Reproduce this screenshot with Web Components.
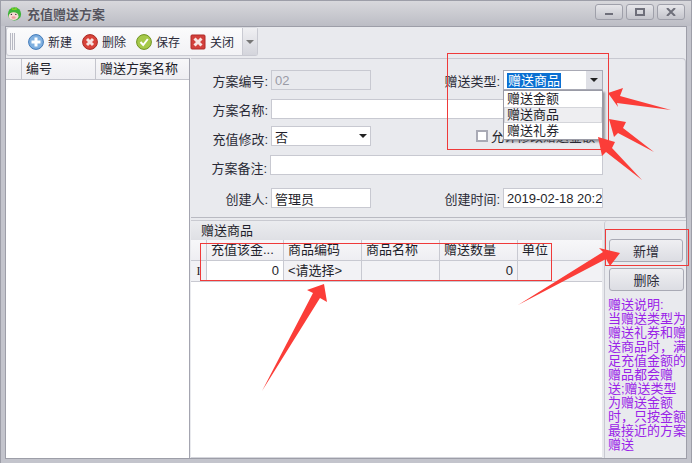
<!DOCTYPE html>
<html>
<head>
<meta charset="utf-8">
<title>充值赠送方案</title>
<style>
  html, body { margin: 0; padding: 0; }
  body { font: 13px "Liberation Sans", "Noto Sans CJK SC", sans-serif; color: #1f1f2b; overflow: hidden; }
</style>
</head>
<body>
<app-window caption="充值赠送方案">
  <tool-bar>
    <tool-button icon="add">新建</tool-button>
    <tool-button icon="del">删除</tool-button>
    <tool-button icon="save">保存</tool-button>
    <tool-button icon="close">关闭</tool-button>
  </tool-bar>
  <div slot="left"><plan-list></plan-list></div>
  <plan-form slot="form"></plan-form>
  <gift-grid slot="grid"></gift-grid>
  <side-panel slot="side"></side-panel>
</app-window>
<mark-up></mark-up>

<script>
const FONT = '"Liberation Sans", "Noto Sans CJK SC", sans-serif';

class AppWindow extends HTMLElement {
  constructor() {
    super();
    this.attachShadow({ mode: 'open' });
    this.shadowRoot.innerHTML = `
      <style>
        :host { display: flex; flex-direction: column; width: 692px; height: 463px; box-sizing: border-box;
          background: #c3c4cc; border: 1px solid #9d9ea8; border-bottom: 0; font: 13px ${FONT}; }
        .title { height: 25px; display: flex; align-items: center; padding: 0 6px 0 6px; gap: 3px;
          background: linear-gradient(#d8d8dc, #bcbdc5); color: #55555f; font-size: 13px; font-weight: 700; flex: none; }
        .title span { flex: 1; margin-left: 2px; text-shadow: 0 0 1px #eee; }
        .wbtns { display: flex; gap: 3px; margin-top: -3px; }
        .wbtns i { width: 26px; height: 14px; border: 1px solid #9fa0aa; border-radius: 3px;
          background: linear-gradient(#e6e6ea, #c4c5cc); display: flex; align-items: center; justify-content: center; }
        .body { flex: 1; margin: 0 4px 4px 4px; border: 1px solid #9d9ea8; background: #e9eaee;
          display: flex; flex-direction: column; min-height: 0; }
        .top { height: 30px; flex: none; padding-top: 0; }
        .main { flex: 1; display: flex; margin-top: 1px; min-height: 0; }
        .left { width: 183px; flex: none; border-right: 1px solid #a4a5b0; background: #fff; border-top: 1px solid #b4b5bf; }
        .right { flex: 1; margin-left: 1px; display: flex; flex-direction: column; min-width: 0; }
        .bottom { flex: 1; display: flex; min-height: 0; margin-top: 2px; border-top: 1px solid #c9cad1; }
        .gridbox { width: 411px; flex: none; }
        .sidebox { flex: 1; margin-left: 2px; }
      </style>
      <div class="title">
        <svg width="15" height="17" viewBox="0 0 17 18">
          <circle cx="8.5" cy="9.5" r="7.5" fill="#3fb33a"/>
          <path d="M5 2 L8 4 L11 1.5 L11 5 L6 5Z" fill="#7ed321"/>
          <ellipse cx="7.5" cy="12" rx="5.5" ry="4.5" fill="#f7d9d4"/>
          <ellipse cx="7.5" cy="13.5" rx="2.4" ry="1.5" fill="#ee9da0"/>
          <circle cx="5" cy="10" r=".8" fill="#333"/><circle cx="10" cy="10" r=".8" fill="#333"/>
        </svg>
        <span id="cap"></span>
        <div class="wbtns">
          <i><svg width="10" height="8"><rect x="1" y="5" width="8" height="2" fill="#6e6f7a"/></svg></i>
          <i><svg width="10" height="8"><rect x="1" y="1" width="8" height="6" fill="none" stroke="#6e6f7a" stroke-width="2"/></svg></i>
          <i><svg width="10" height="8"><path d="M1 0 L9 8 M9 0 L1 8" stroke="#6e6f7a" stroke-width="2"/></svg></i>
        </div>
      </div>
      <div class="body">
        <div class="top"><slot></slot></div>
        <div class="main">
          <div class="left"><slot name="left"></slot></div>
          <div class="right">
            <slot name="form"></slot>
            <div class="bottom">
              <div class="gridbox"><slot name="grid"></slot></div>
              <div class="sidebox"><slot name="side"></slot></div>
            </div>
          </div>
        </div>
      </div>`;
    this.shadowRoot.getElementById('cap').textContent = this.getAttribute('caption');
  }
}

class ToolBar extends HTMLElement {
  constructor() {
    super();
    this.attachShadow({ mode: 'open' });
    this.shadowRoot.innerHTML = `
      <style>
        :host { display: flex; width: 252px; height: 29px; box-sizing: border-box; margin-left: 0;
          border: 1px solid #c9cad2; border-top-color: #dcdde2; border-radius: 3px; background: linear-gradient(#fbfbfc, #f2f2f5); }
        .grip { width: 5px; margin: 5px 13px 5px 3px; flex: none;
          background: repeating-linear-gradient(90deg, #b7b8c2 0 1px, #f5f5f7 1px 2px); }
        .items { display: flex; align-items: center; gap: 10px; flex: 1; }
        .more { width: 14px; flex: none; border-left: 1px solid #c9cad2; background: linear-gradient(#f0f0f3, #d4d5dc);
          display: flex; align-items: center; justify-content: center; }
        .more i { border: 4px solid transparent; border-top: 4px solid #777; border-bottom: 0; }
      </style>
      <div class="grip"></div>
      <div class="items"><slot></slot></div>
      <div class="more"><i></i></div>`;
  }
}

const TOOL_ICONS = {
  add: `<circle cx="8" cy="8" r="7.4" fill="#7fb0e0" stroke="#3f78b8"/><path d="M8 3.5V12.5M3.5 8H12.5" stroke="#fff" stroke-width="3"/>`,
  del: `<circle cx="8" cy="8" r="7.4" fill="#d8433a" stroke="#a92a24"/><path d="M5 5L11 11M11 5L5 11" stroke="#f6e4e2" stroke-width="3"/>`,
  save: `<circle cx="8" cy="8" r="7.4" fill="#a6c94a" stroke="#6f9320"/><path d="M4.5 8L7.2 11L11.8 5" fill="none" stroke="#fff" stroke-width="2"/>`,
  close: `<rect x="1" y="1" width="14" height="14" rx="1" fill="#d2403c" stroke="#b02a28"/><path d="M4.5 4.5L11.5 11.5M11.5 4.5L4.5 11.5" stroke="#f7e6e4" stroke-width="3"/>`
};

class ToolButton extends HTMLElement {
  constructor() {
    super();
    this.attachShadow({ mode: 'open' });
    const icon = TOOL_ICONS[this.getAttribute('icon')];
    this.shadowRoot.innerHTML = `
      <style>
        :host { display: inline-flex; align-items: center; gap: 4px; color: #2b2b3a; font-size: 12px; }
        svg { flex: none; }
      </style>
      <svg width="16" height="16" viewBox="0 0 16 16">${icon}</svg><slot></slot>`;
  }
}

class PlanList extends HTMLElement {
  constructor() {
    super();
    this.attachShadow({ mode: 'open' });
    this.shadowRoot.innerHTML = `
      <style>
        :host { display: block; }
        .head { display: flex; height: 20px; background: linear-gradient(#f7f7f9, #eeeef2); border-bottom: 1px solid #c4c5cd; line-height: 20px; }
        .head div { border-right: 1px solid #c4c5cd; padding-left: 4px; box-sizing: border-box; white-space: nowrap; }
      </style>
      <div class="head">
        <div style="width:16px"></div>
        <div style="width:74px">编号</div>
        <div style="flex:1;border-right:0">赠送方案名称</div>
      </div>`;
  }
}

class FormField extends HTMLElement {
  constructor() {
    super();
    this.attachShadow({ mode: 'open' });
    const label = this.getAttribute('label');
    const labelWidth = this.getAttribute('label-width') || 77;
    const drop = this.getAttribute('label-drop') || 0;
    const width = this.getAttribute('width');
    this.shadowRoot.innerHTML = `
      <style>
        :host { display: flex; align-items: center; height: 20px; flex: ${width ? 'none' : '1'}; }
        label { width: ${labelWidth}px; text-align: right; flex: none; margin: ${drop}px 3px 0 0; white-space: nowrap; color: #2a2a36; }
        .box { position: relative; box-sizing: border-box; height: 20px; flex: 1; display: flex; align-items: center; }
      </style>
      <label>${label}:</label>
      <div class="box" style="${width ? 'width:' + width + 'px;flex:none' : ''}"><slot></slot></div>`;
  }
}

class TextBox extends HTMLElement {
  constructor() {
    super();
    this.attachShadow({ mode: 'open' });
    const off = this.hasAttribute('disabled');
    this.shadowRoot.innerHTML = `
      <style>
        :host { display: flex; align-items: center; box-sizing: border-box; width: 100%; height: 20px; padding-left: 3px;
          border: 1px solid #c8c9d1; background: ${off ? '#e9eaee' : '#fff'}; color: ${off ? '#9a9ba6' : '#1f1f2b'};
          white-space: nowrap; overflow: hidden; letter-spacing: 0; }
      </style>
      <slot></slot>`;
  }
}

class ComboBox extends HTMLElement {
  constructor() {
    super();
    this.attachShadow({ mode: 'open' });
    const open = this.hasAttribute('open');
    this.shadowRoot.innerHTML = `
      <style>
        :host { display: flex; align-items: center; position: relative; box-sizing: border-box; width: 100%; height: 20px;
          padding-left: 3px; border: 1px solid #c8c9d1; background: #fff; }
        :host([open]) { border-color: #a9aab5; }
        .val { flex: 1; }
        :host([open]) .val span { background: #0a6fd2; color: #fff; padding: 0 1px; display: inline-block; line-height: 15px; }
        .arrow { width: ${open ? 16 : 15}px; align-self: stretch; flex: none; display: flex; align-items: center; justify-content: center;
          background: ${open ? '#dfe0e6' : '#fff'}; }
        .arrow i { border: 4px solid transparent; border-top: 4px solid #222; border-bottom: 0; }
        .pop { position: absolute; left: -1px; top: 19px; width: 100px; box-sizing: border-box; z-index: 5; background: #fff;
          border: 1px solid #9a9ba6; box-shadow: 2px 2px 2px rgba(80,80,90,.55); }
        .pop ::slotted(div) { height: 16px; line-height: 15px; padding-left: 3px; box-sizing: border-box; white-space: nowrap; }
        .pop ::slotted(.hot) { background: #eeeef1; outline: 1px solid #d4d5da; outline-offset: -1px; }
      </style>
      <div class="val"><span id="v"></span></div>
      <div class="arrow"><i></i></div>
      ${open ? '<div class="pop"><slot></slot></div>' : ''}`;
    this.shadowRoot.getElementById('v').textContent = this.getAttribute('value');
  }
}

class PlanForm extends HTMLElement {
  constructor() {
    super();
    this.attachShadow({ mode: 'open' });
    this.shadowRoot.innerHTML = `
      <style>
        :host { display: flex; flex-direction: column; height: 160px; box-sizing: border-box; flex: none;
          border: 1px solid #c8c9d1; border-left: 0; border-radius: 0 4px 0 0; padding: 11px 0 0 0;
          background: #e9eaee; border-bottom: 1px solid #b9bac2; }
        .row { display: flex; align-items: center; width: 412px; height: 20px; }
        .check { display: flex; align-items: center; gap: 3px; margin-left: 105px; white-space: nowrap; overflow: hidden; flex: 1; }
        .check i { width: 8px; height: 8px; border: 2px solid #a9aab5; background: #fff; flex: none; }
        .check span { margin-top: -2px; }
      </style>
      <div class="row">
        <form-field label="方案编号" width="100"><text-box disabled>02</text-box></form-field>
        <form-field label="赠送类型" label-width="129" width="100" style="z-index:5">
          <combo-box open value="赠送商品">
            <div>赠送金额</div>
            <div class="hot">赠送商品</div>
            <div>赠送礼券</div>
          </combo-box>
        </form-field>
      </div>
      <div class="row" style="margin-top:9px"><form-field label="方案名称"><text-box></text-box></form-field></div>
      <div class="row" style="margin-top:7px">
        <form-field label="充值修改" label-drop="4" width="100"><combo-box value="否"></combo-box></form-field>
        <div class="check"><i></i><span>允许修改赠送金额</span></div>
      </div>
      <div class="row" style="margin-top:9px"><form-field label="方案备注" label-width="76" label-drop="4"><text-box></text-box></form-field></div>
      <div class="row" style="margin-top:13px">
        <form-field label="创建人" width="100"><text-box>管理员</text-box></form-field>
        <form-field label="创建时间" label-width="129" width="100"><text-box>2019-02-18 20:2</text-box></form-field>
      </div>`;
  }
}

class GiftGrid extends HTMLElement {
  constructor() {
    super();
    this.attachShadow({ mode: 'open' });
    const cols = '16px 77px 78px 78px 78px 1fr';
    this.shadowRoot.innerHTML = `
      <style>
        :host { display: flex; flex-direction: column; height: 100%; box-sizing: border-box; background: #fff; border-bottom: 1px solid #d5d6dc; }
        .cap { height: 19px; line-height: 19px; padding-left: 10px; background: linear-gradient(#ebecef, #dfe0e5); flex: none; }
        .r { display: grid; grid-template-columns: ${cols}; height: 21px; box-sizing: border-box; border-bottom: 1px solid #c8c9d1; line-height: 20px; flex: none; }
        .r > div { border-right: 1px solid #c8c9d1; padding: 0 4px; white-space: nowrap; overflow: hidden; }
        .r > div:last-child { border-right: 0; }
        .h { background: linear-gradient(#f7f7f9, #eeeef2); }
        .d { background: #f2f2f5; }
        .d .w { background: #fff; text-align: right; }
        .d .n { text-align: right; }
        .i { padding: 0 !important; text-align: center; font: 12px "Liberation Serif", serif; line-height: 20px; color: #222; }
      </style>
      <div class="cap">赠送商品</div>
      <div class="r h"><div></div><div>充值该金...</div><div>商品编码</div><div>商品名称</div><div>赠送数量</div><div>单位</div></div>
      <div class="r d"><div class="i">I</div><div class="w">0</div><div>&lt;请选择&gt;</div><div></div><div class="n">0</div><div></div></div>`;
  }
}

class SidePanel extends HTMLElement {
  constructor() {
    super();
    this.attachShadow({ mode: 'open' });
    this.shadowRoot.innerHTML = `
      <style>
        :host { display: block; height: 100%; box-sizing: border-box; padding: 18px 0 0 3px; background: #e9eaee;
          border-left: 1px solid #c8c9d1; border-radius: 3px 0 0 0; }
        button { display: block; width: 75px; height: 23px; padding: 0; margin: 0 0 6px 1px; font: inherit; color: #2a2a36;
          border: 1px solid #a9aab5; border-radius: 3px; background: linear-gradient(#efeff2, #dcdde3); }
        button:first-of-type { width: 74px; }
        p { margin: 7px 0 0 0; color: #9a22e8; line-height: 14px; font-size: 13px; white-space: nowrap; }
      </style>
      <button>新增</button>
      <button>删除</button>
      <p>赠送说明:<br>当赠送类型为<br>赠送礼券和赠<br>送商品时，满<br>足充值金额的<br>赠品都会赠<br>送;赠送类型<br>为赠送金额<br>时，只按金额<br>最接近的方案<br>赠送</p>`;
  }
}

class MarkUp extends HTMLElement {
  constructor() {
    super();
    this.attachShadow({ mode: 'open' });
    this.shadowRoot.innerHTML = `
      <style>
        :host { position: absolute; left: 0; top: 0; width: 692px; height: 463px; pointer-events: none; z-index: 10; }
        svg { display: block; }
      </style>
      <svg width="692" height="463" viewBox="0 0 692 463">
        <g fill="none" stroke="#ef3a3a" stroke-width="1">
          <rect x="447.5" y="53.5" width="161" height="96"/>
          <rect x="200.5" y="243.5" width="351" height="37"/>
          <rect x="605.5" y="229.5" width="83" height="36"/>
        </g>
        <g fill="#fb3d38">
          <path d="M608 93 L623 88 L620 96 L671 110 L617 103 L618 107Z"/>
          <path d="M609 119 L626 122 L623 128 L654 152 L618 133 L614 137Z"/>
          <path d="M598 137 L615 142 L612 148 L642 180 L606 152 L602 156Z"/>
          <path d="M324 284 L327 302 L320 298 L262 391 L313 293 L307 290Z"/>
          <path d="M620 253 L610 266 L606 259 L518 305 L603 252 L599 248Z"/>
        </g>
      </svg>`;
  }
}

customElements.define('app-window', AppWindow);
customElements.define('tool-bar', ToolBar);
customElements.define('tool-button', ToolButton);
customElements.define('plan-list', PlanList);
customElements.define('form-field', FormField);
customElements.define('text-box', TextBox);
customElements.define('combo-box', ComboBox);
customElements.define('plan-form', PlanForm);
customElements.define('gift-grid', GiftGrid);
customElements.define('side-panel', SidePanel);
customElements.define('mark-up', MarkUp);
</script>
</body>
</html>
